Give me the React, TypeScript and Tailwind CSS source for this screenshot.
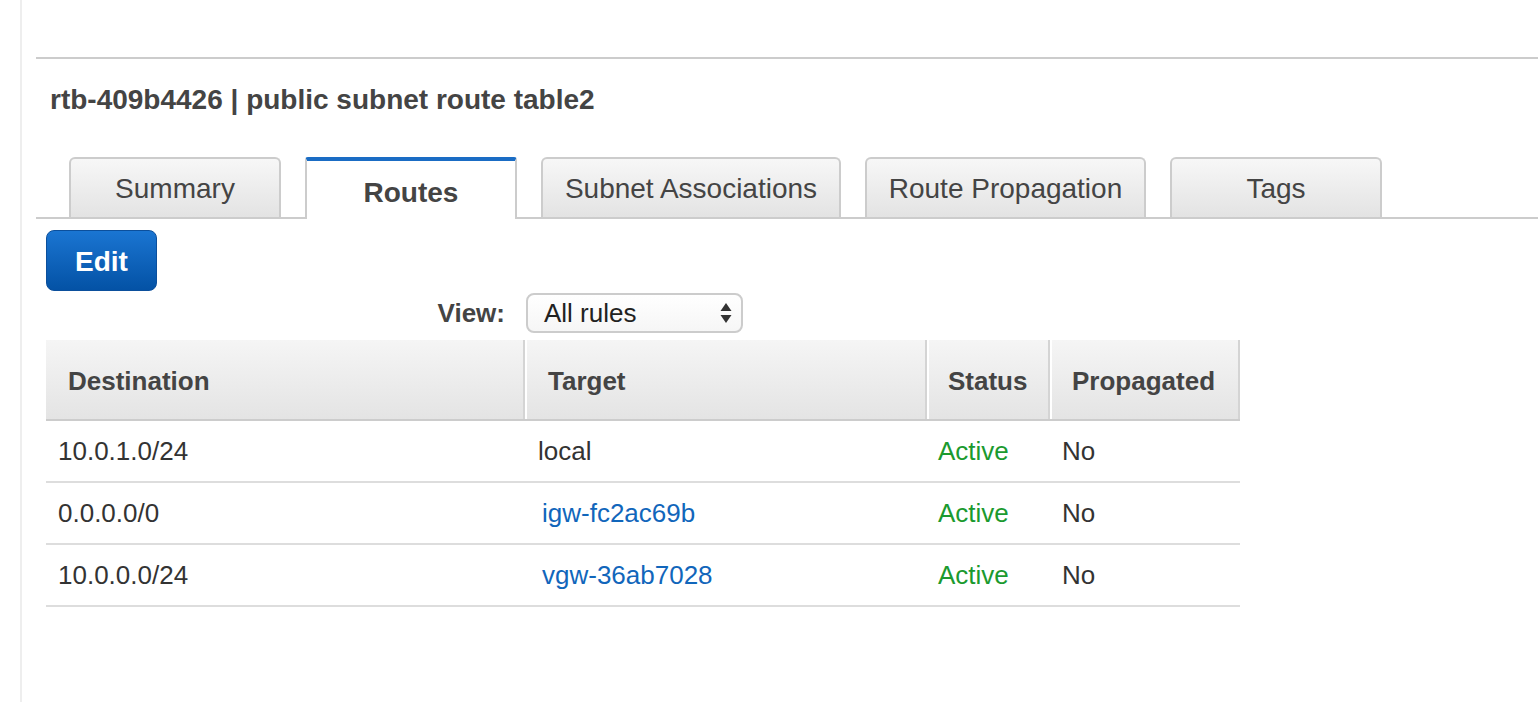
const tabs = [
  { label: "Summary", w: "w-[212px]" },
  { label: "Routes", w: "w-[212px]", active: true },
  { label: "Subnet Associations", w: "w-[300px]" },
  { label: "Route Propagation", w: "w-[281px]" },
  { label: "Tags", w: "w-[212px]" },
]

const routes = [
  { dest: "10.0.1.0/24", target: "local", link: false },
  { dest: "0.0.0.0/0", target: "igw-fc2ac69b", link: true },
  { dest: "10.0.0.0/24", target: "vgw-36ab7028", link: true },
]

export default function App() {
  return (
    <div className="flex h-[702px] bg-white font-['Liberation_Sans',Arial,sans-serif] text-[#444]">
      {/* left rail */}
      <div className="w-[20px] shrink-0" />
      <div className="w-[2px] shrink-0 bg-[#eeeeee]" />

      <div className="flex-1 pl-[14px]">
        <div className="mt-[57px] border-t-2 border-[#cccccc]" />

        {/* Title */}
        <h1 className="mt-[25px] pl-[14px] text-[28px] font-bold leading-[32px]">
          rtb-409b4426 | public subnet route table2
        </h1>

        {/* Tabs */}
        <div className="mt-[41px] flex items-end gap-[24px] border-b-2 border-[#cccccc] pl-[33px]">
          {tabs.map((t) =>
            t.active ? (
              <div
                key={t.label}
                className={`${t.w} -mb-[2px] flex h-[62px] items-center justify-center rounded-t-[3px] border-x-2 border-t-[4px] border-x-[#cccccc] border-t-[#1a6cc4] bg-white pt-[6px] text-[28px] font-bold`}
              >
                {t.label}
              </div>
            ) : (
              <div
                key={t.label}
                className={`${t.w} flex h-[60px] items-center justify-center rounded-t-[6px] border-x-2 border-t-2 border-[#cccccc] bg-gradient-to-b from-[#f7f7f7] to-[#e3e3e3] pt-[2px] text-[28px]`}
              >
                {t.label}
              </div>
            )
          )}
        </div>

        {/* Edit */}
        <button className="ml-[10px] mt-[11px] flex h-[61px] w-[111px] items-center justify-center rounded-[8px] border border-[#0b4f9c] bg-gradient-to-b from-[#1a75d2] to-[#0452a5] pt-[3px] text-[28px] font-bold text-white">
          Edit
        </button>

        {/* View filter */}
        <div className="mt-[2px] flex w-[707px] items-center justify-end gap-[21px]">
          <span className="text-[26px] font-bold">View:</span>
          <div className="flex h-[40px] w-[217px] items-center justify-between rounded-[8px] border-2 border-[#cccccc] bg-gradient-to-b from-white to-[#f6f6f6] pl-[16px] pr-[8px] text-[26px] text-[#222]">
            <span>All rules</span>
            <svg width="14" height="24" viewBox="0 0 14 24" className="text-[#333]">
              <path d="M7 2 L12.5 10 H1.5 Z" fill="currentColor" />
              <path d="M7 22 L12.5 14 H1.5 Z" fill="currentColor" />
            </svg>
          </div>
        </div>

        {/* Routes table */}
        <div className="ml-[10px] mt-[7px] w-[1194px]">
          <div className="grid h-[81px] grid-cols-[479px_402px_123px_190px] border-b-2 border-[#cccccc] bg-gradient-to-b from-[#f5f5f5] to-[#e4e4e4] text-[26px] font-bold">
            <div className="flex items-center border-r-2 border-[#d4d4d4] pl-[22px] pt-[4px]">Destination</div>
            <div className="flex items-center border-x-2 border-l-white border-r-[#d4d4d4] pl-[21px] pt-[4px]">Target</div>
            <div className="flex items-center border-x-2 border-l-white border-r-[#d4d4d4] pl-[19px] pt-[4px]">Status</div>
            <div className="flex items-center border-x-2 border-l-white border-r-[#d4d4d4] pl-[20px] pt-[4px]">Propagated</div>
          </div>

          {routes.map((r) => (
            <div
              key={r.dest}
              className="grid h-[62px] grid-cols-[479px_402px_123px_190px] items-center border-b-2 border-[#dddddd] text-[26px]"
            >
              <div className="pl-[12px] text-[#333]">{r.dest}</div>
              <div className={r.link ? "pl-[17px] text-[#1166bb]" : "pl-[13px] text-[#333]"}>{r.target}</div>
              <div className="pl-[11px] text-[#1b9a2f]">Active</div>
              <div className="pl-[12px] text-[#333]">No</div>
            </div>
          ))}
        </div>
      </div>
    </div>
  )
}
